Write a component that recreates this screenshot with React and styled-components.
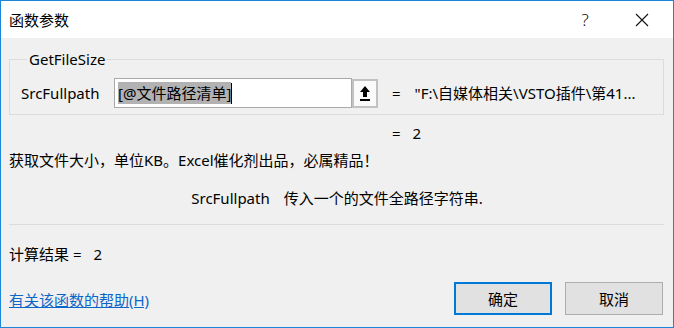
import React from 'react';
import styled, { createGlobalStyle } from 'styled-components';

const GlobalStyle = createGlobalStyle`
  html, body {
    margin: 0;
    padding: 0;
    background: #ffffff;
  }
  * {
    box-sizing: border-box;
  }
`;

const Window = styled.div`
  width: 674px;
  height: 328px;
  border: 1px solid #1b86d9;
  display: flex;
  flex-direction: column;
  font-family: "Noto Sans", "Noto Sans CJK SC", sans-serif;
  font-size: 15px;
  color: #000;
  background: #f0f0f0;
`;

const TitleBar = styled.div`
  height: 37px;
  flex: none;
  background: #ffffff;
  display: flex;
  align-items: center;
  padding-left: 8px;
`;

const Title = styled.div`
  line-height: 20px;
`;

const Controls = styled.div`
  margin-left: auto;
  display: flex;
  gap: 11px;
  padding-right: 8px;
  height: 100%;
`;

const ControlButton = styled.div`
  width: 46px;
  display: flex;
  align-items: center;
  justify-content: center;
  font-size: 17px;
  font-weight: 300;
  color: #111;
`;

const Body = styled.div`
  flex: 1;
  display: flex;
  flex-direction: column;
  padding: 0 9px 0 8px;
`;

const Group = styled.fieldset`
  margin: 11px 0 0 0;
  padding: 0 0 6px 11px;
  border: 1px solid #dcdcdc;
  min-width: 0;
`;

const Legend = styled.legend`
  margin-left: 6px;
  padding: 0 2px;
  line-height: 20px;
`;

const ArgRow = styled.div`
  margin-top: 9px;
  display: flex;
  align-items: center;
  height: 30px;
`;

const ArgName = styled.div`
  width: 93px;
  line-height: 20px;
`;

const InputBox = styled.div`
  width: 238px;
  height: 30px;
  border: 1px solid #a9a9a9;
  background: #ffffff;
  display: flex;
  align-items: center;
  padding-left: 3px;
`;

const Selected = styled.span`
  background: #b2b2b2;
  line-height: 22px;
  font-size: 15px;
`;

const Caret = styled.span`
  width: 1px;
  height: 21px;
  background: #000;
`;

const RefButton = styled.div`
  width: 26px;
  height: 29px;
  border: 2px solid #c2c2c2;
  background: #fafafa;
  display: flex;
  align-items: center;
  justify-content: center;
`;

const Equals = styled.span`
  margin-left: ${({ $offset }) => $offset}px;
  line-height: 20px;
`;

const Value = styled.span`
  margin-left: ${({ $gap }) => $gap}px;
  line-height: 20px;
  white-space: nowrap;
`;

const ResultLine = styled.div`
  margin-top: 8px;
  padding-left: 383px;
  display: flex;
  line-height: 20px;
`;

const Description = styled.div`
  margin-top: 7px;
  line-height: 20px;
`;

const ParamHelp = styled.div`
  margin-top: 18px;
  display: flex;
  justify-content: center;
  gap: 14px;
  line-height: 20px;
  padding-left: 1px;
`;

const Separator = styled.div`
  margin-top: 16px;
  height: 1px;
  background: #dcdcdc;
`;

const Formula = styled.div`
  margin-top: 19px;
  display: flex;
  line-height: 20px;
`;

const Footer = styled.div`
  margin-top: 18px;
  display: flex;
  align-items: center;
  padding-right: 1px;
`;

const HelpLink = styled.a`
  color: #0b66c8;
  text-decoration: underline;
  line-height: 20px;
  margin-top: 2px;
  cursor: pointer;
`;

const Buttons = styled.div`
  margin-left: auto;
  display: flex;
  gap: 13px;
`;

const DialogButton = styled.div`
  width: 98px;
  height: 33px;
  display: flex;
  align-items: center;
  justify-content: center;
  background: #e1e1e1;
  border: ${({ $primary }) => ($primary ? '2px solid #0078d7' : '1px solid #adadad')};
`;

const CloseIcon = () => (
  <svg width="14" height="14" viewBox="0 0 14 14">
    <path d="M1 1 L13 13 M13 1 L1 13" stroke="#111" strokeWidth="1.1" fill="none" />
  </svg>
);

const UpArrowIcon = () => (
  <svg width="12" height="17" viewBox="0 0 12 17">
    <path d="M6 1 L11 7 L8 7 L8 12 L4 12 L4 7 L1 7 Z" fill="#000" />
    <rect x="1" y="14" width="10" height="2" fill="#000" />
  </svg>
);

export default function App() {
  return (
    <>
      <GlobalStyle />
      <Window>
        <TitleBar>
          <Title>函数参数</Title>
          <Controls>
            <ControlButton>?</ControlButton>
            <ControlButton><CloseIcon /></ControlButton>
          </Controls>
        </TitleBar>
        <Body>
          <Group>
            <Legend>GetFileSize</Legend>
            <ArgRow>
              <ArgName>SrcFullpath</ArgName>
              <InputBox>
                <Selected>[@文件路径清单]</Selected>
                <Caret />
              </InputBox>
              <RefButton><UpArrowIcon /></RefButton>
              <Equals $offset={14}>=</Equals>
              <Value $gap={14}>{'"F:\\自媒体相关\\VSTO插件\\第41...'}</Value>
            </ArgRow>
          </Group>
          <ResultLine>
            <span>=</span>
            <Value $gap={12}>2</Value>
          </ResultLine>
          <Description>获取文件大小，单位KB。Excel催化剂出品，必属精品！</Description>
          <ParamHelp>
            <span>SrcFullpath</span>
            <span>传入一个的文件全路径字符串.</span>
          </ParamHelp>
          <Separator />
          <Formula>
            <span>计算结果 =</span>
            <Value $gap={12}>2</Value>
          </Formula>
          <Footer>
            <HelpLink>有关该函数的帮助(H)</HelpLink>
            <Buttons>
              <DialogButton $primary>确定</DialogButton>
              <DialogButton>取消</DialogButton>
            </Buttons>
          </Footer>
        </Body>
      </Window>
    </>
  );
}
